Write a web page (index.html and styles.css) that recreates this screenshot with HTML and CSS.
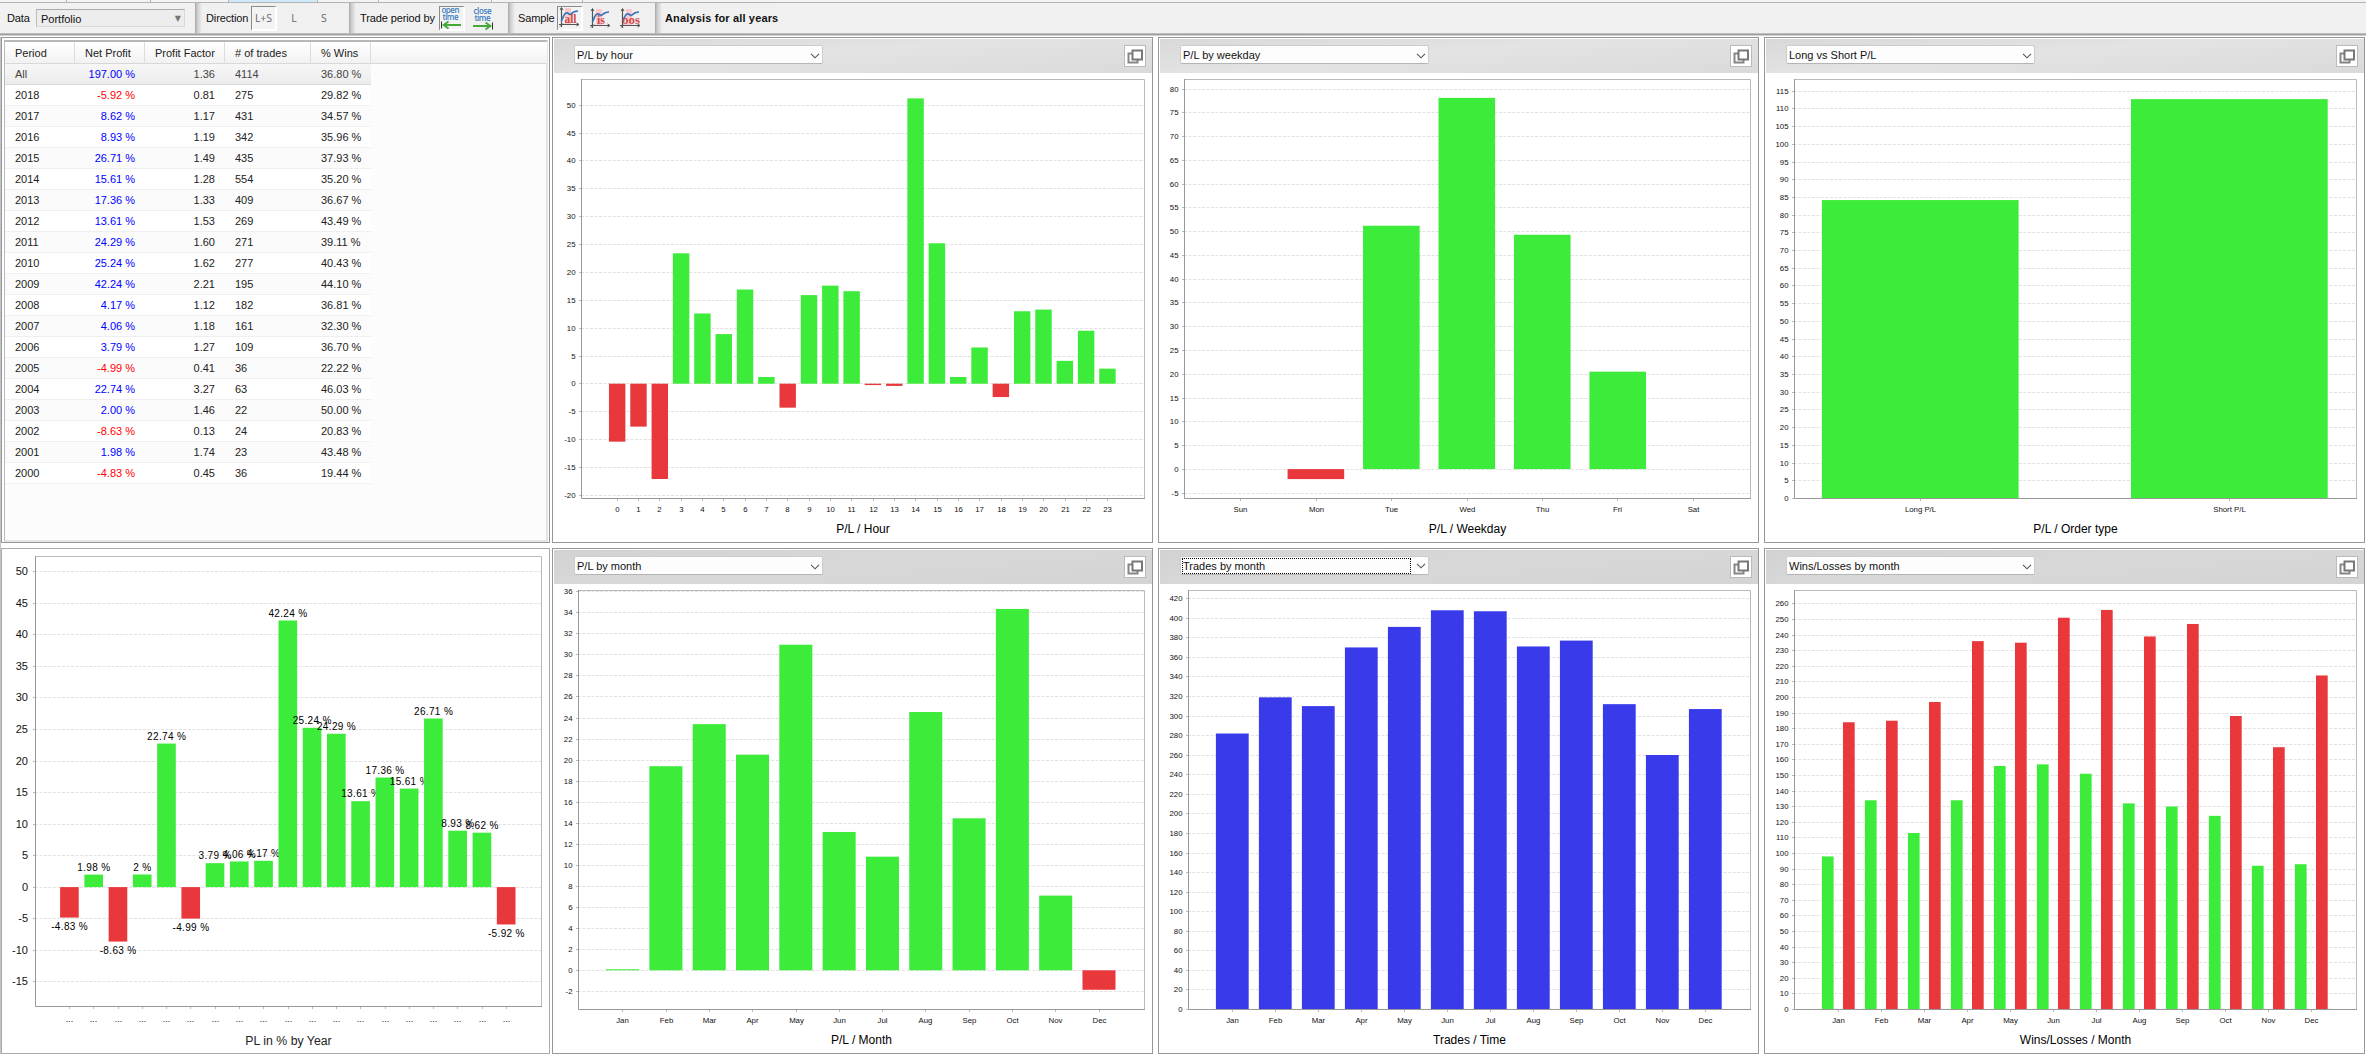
FILE: index.html
```html
<!DOCTYPE html>
<html lang="en">
<head>
<meta charset="utf-8">
<title>Analysis for all years</title>
<link rel="stylesheet" href="styles.css">
</head>
<body>
<svg class="symbols" width="0" height="0">
  <symbol id="sample" viewBox="0 0 21 21">
    <rect x="6" y="1" width="6" height="17" fill="#fbc9cb"/>
    <path d="M2.500 1v19M0 17.500h19.500" fill="none" stroke="#555" stroke-width="1.200"/>
    <path d="M1 3l1.500-2.500L4 3M1 19.500l3-3M17.500 16l2.500 1.500-2.500 1.500" fill="none" stroke="#555"/>
    <path d="M2 14C4 13 4 7 7 6s3 3 5 1 3-3 7-3" fill="none" stroke="#3576bd" stroke-width="1.700"/>
  </symbol>
  <symbol id="popout" viewBox="0 0 20 20">
    <path d="M3.500 7.500h9v9h-9z" fill="#fff" stroke="#858585" stroke-width="2"/>
    <path d="M7.500 4.500h9.500v9H7.500z" fill="#fff" stroke="#777" stroke-width="2"/>
  </symbol>
  <symbol id="chevron" viewBox="0 0 10 6"><path d="M1 .8l4 4 4-4" fill="none" stroke="#555" stroke-width="1.100"/></symbol>
</svg>

<div class="tabs"><i></i><i></i><i></i><i class="active"></i><i></i><i></i><i></i></div>
<header class="toolbar">
  <div class="group group-data"><span>Data</span><div class="combo"><span>Portfolio</span><b>▼</b></div></div>
  <div class="group group-direction"><span>Direction</span>
    <button class="tool pressed">L+S</button><button class="tool">L</button><button class="tool">S</button></div>
  <div class="group group-period"><span>Trade period by</span>
    <button class="tool pressed"><svg width="23" height="23" viewBox="0 0 23 23"><text class="time" x="10.500" y="7" textLength="18">open</text><text class="time" x="10.500" y="14" textLength="16">time</text><path d="M1.500 15.500v7" stroke="#333"/><path d="M21 19H5" stroke="#45a83a" stroke-width="2"/><path d="M8.500 15.500L3.500 19l5 3.500" fill="none" stroke="#45a83a" stroke-width="1.800"/></svg></button>
    <button class="tool close-time"><svg width="23" height="23" viewBox="0 0 23 23"><text class="time" x="11.500" y="7" textLength="18">close</text><text class="time" x="11.500" y="14" textLength="16">time</text><path d="M21.500 15.500v7" stroke="#333"/><path d="M2 19h16" stroke="#45a83a" stroke-width="2"/><path d="M14.500 15.500l5 3.500-5 3.500" fill="none" stroke="#45a83a" stroke-width="1.800"/></svg></button></div>
  <div class="group group-sample"><span>Sample</span>
    <button class="tool pressed"><svg width="21" height="21"><use href="#sample"/><text class="word" x="11.500" y="16" textLength="12" lengthAdjust="spacingAndGlyphs">all</text></svg></button>
    <button class="tool"><svg width="21" height="21"><use href="#sample"/><text class="word" x="11" y="16" textLength="8" lengthAdjust="spacingAndGlyphs">is</text></svg></button>
    <button class="tool oos"><svg width="21" height="21"><use href="#sample"/><text class="word" x="11" y="16" textLength="18" lengthAdjust="spacingAndGlyphs">oos</text></svg></button></div>
  <div class="group group-title"><strong>Analysis for all years</strong></div>
</header>

<main class="grid">
  <section class="panel periods">
    <div class="table-frame">
      <table>
        <thead><tr><th>Period</th><th>Net Profit</th><th>Profit Factor</th><th># of trades</th><th>% Wins</th><th></th></tr></thead>
        <tbody id="period-rows"></tbody>
      </table>
    </div>
  </section>
  <section class="panel">
    <div class="panel-head"><div class="select"><span>P/L by hour</span><svg><use href="#chevron"/></svg></div><button class="pop"><svg><use href="#popout"/></svg></button></div>
    <svg class="chart" id="hour"></svg>
  </section>
  <section class="panel">
    <div class="panel-head"><div class="select"><span>P/L by weekday</span><svg><use href="#chevron"/></svg></div><button class="pop"><svg><use href="#popout"/></svg></button></div>
    <svg class="chart" id="weekday"></svg>
  </section>
  <section class="panel">
    <div class="panel-head"><div class="select"><span>Long vs Short P/L</span><svg><use href="#chevron"/></svg></div><button class="pop"><svg><use href="#popout"/></svg></button></div>
    <svg class="chart" id="order"></svg>
  </section>
  <section class="panel yearly">
    <svg class="chart large" id="year"></svg>
  </section>
  <section class="panel lower">
    <div class="panel-head"><div class="select"><span>P/L by month</span><svg><use href="#chevron"/></svg></div><button class="pop"><svg><use href="#popout"/></svg></button></div>
    <svg class="chart" id="month"></svg>
  </section>
  <section class="panel lower">
    <div class="panel-head"><div class="select focused"><span>Trades by month</span><svg><use href="#chevron"/></svg></div><button class="pop"><svg><use href="#popout"/></svg></button></div>
    <svg class="chart" id="trades"></svg>
  </section>
  <section class="panel lower">
    <div class="panel-head"><div class="select"><span>Wins/Losses by month</span><svg><use href="#chevron"/></svg></div><button class="pop"><svg><use href="#popout"/></svg></button></div>
    <svg class="chart" id="wins"></svg>
  </section>
</main>
<script src="script.js"></script>
</body>
</html>
```
FILE: styles.css
```css
* { box-sizing: border-box; }
body {
  margin: 0;
  width: 2366px;
  height: 1056px;
  overflow: hidden;
  background: #fff;
  font: 11px "Liberation Sans", Arial, sans-serif;
  color: #111;
}
.symbols { position: absolute; }
button { padding: 0; border: 0; background: none; font: inherit; }

.tabs { display: flex; height: 3px; background: #f3f3f3; border-bottom: 1px solid #b4b4b4; }
.tabs i { border-right: 1px solid #b4b4b4; width: 84px; }
.tabs i:nth-child(1) { width: 67px; }
.tabs i:nth-child(3) { width: 78px; }
.tabs .active { width: 89px; background: #cdeafa; }
.tabs i:nth-child(5) { width: 61px; }
.tabs i:nth-child(6) { width: 113px; }
.tabs i:nth-child(7) { width: 91px; }

.toolbar {
  display: flex;
  height: 34px;
  padding-bottom: 3px;
  background: linear-gradient(#f1f1f1 0 30px, #bdbdbd 30px 31px, #9f9f9f 31px 32px, #d0d0d0 32px 33px, #fff 33px);
}
.group { display: flex; align-items: center; height: 30px; white-space: nowrap; }
.group + .group { background: linear-gradient(90deg, #a4a4a4 0, #c9c9c9 2px, #f0f0f0 7px); }
.group-data { width: 195px; padding-left: 7px; }
.group-direction { width: 154px; padding-left: 11px; }
.group-period { width: 159px; padding-left: 11px; }
.group-sample { width: 147px; padding-left: 10px; }
.group-title { padding-left: 10px; letter-spacing: 0.15px; }
.group > span { letter-spacing: -0.12px; }
.group-data > span { width: 29px; }
.group-direction > span { width: 45px; }
.group-period > span { width: 79px; }
.group-sample > span { width: 39px; }
.combo {
  display: flex;
  align-items: center;
  justify-content: space-between;
  width: 149px;
  height: 18px;
  padding: 1px 3px 0 4px;
  border: 1px solid #dadada;
  border-top: 1px solid #aaa;
  border-left-color: #bcbcbc;
  background: #ededed;
}
.combo b { color: #777; font: 8px "DejaVu Sans", sans-serif; }
.tool {
  display: flex;
  align-items: center;
  justify-content: center;
  flex: none;
  width: 26px;
  height: 25px;
  margin-right: 4px;
  color: #666;
  font: 10.5px "Open Sans", sans-serif;
  border: 1px solid transparent;
}
.tool svg { flex: none; overflow: visible; }
.pressed { border-color: #8b8b8b #fff #fff #8b8b8b; border-width: 1px 2px 2px 1px; background: #f3f3f3; }
.oos { margin-left: 0; }
.time { font: 600 8px "Open Sans", sans-serif; fill: #3d7dbd; text-anchor: middle; }
.word { font: bold 12px "Liberation Serif", serif; fill: #cf4b4b; text-anchor: middle; }

.grid {
  display: grid;
  grid-template-columns: 551px 606px 606px 601px;
  grid-template-rows: 506px 506px;
  row-gap: 5px;
  padding-left: 1px;
  box-shadow: inset 1px 0 #c4c4c4;
}
.panel { width: 601px; height: 506px; border: 1px solid #979797; background: #fff; }
.periods, .yearly { width: 549px; }
.yearly { border-color: #aaa; }
.panel-head {
  display: flex;
  justify-content: space-between;
  height: 35px;
  padding: 6px 6px 0 20px;
  border: solid #fff;
  border-width: 1px 0 0 1px;
  background: linear-gradient(175deg, #d9d9d9, #e3e3e3 45%, #dfdfdf 70%, #dadada);
}
.lower .panel-head { background: linear-gradient(175deg, #d2d2d2, #d8d8d8 45%, #d4d4d4); }
.select {
  display: flex;
  align-items: center;
  justify-content: space-between;
  width: 249px;
  height: 19px;
  padding: 1px 2px 0 2px;
  border: 1px solid #ccc;
  border-bottom-color: #b5b5b5;
  border-radius: 2px;
  background: #fdfdfd;
}
.select svg { width: 10px; height: 6px; margin-top: 1px; }
.focused { padding: 0 2px 0 1px; }
.focused span { width: 229px; height: 16px; line-height: 14px; border: 1px dotted #000; }
.pop { width: 22px; height: 22px; border: 1px solid #bbb; background: #fff; }
.pop svg { display: block; width: 20px; height: 20px; }

.table-frame {
  height: 502px;
  margin: 2px 1px 0 2px;
  border: 2px solid #e4e4e4;
  border-top: 2px solid #b8b8b8;
  border-left: 1px solid #bbb;
  background: #fcfcfc;
}
table { width: 542px; table-layout: fixed; border-collapse: separate; border-spacing: 0; color: #222; }
th {
  height: 22px;
  padding: 0 10px;
  text-align: left;
  font-weight: normal;
  white-space: nowrap;
  background: linear-gradient(#fff, #f2f2f2);
  border-right: 1px solid #dcdcdc;
  border-bottom: 1px solid #d8d8d8;
}
th:nth-child(1) { width: 70px; }
th:nth-child(2) { width: 70px; padding-right: 15px; text-align: right; }
th:nth-child(3) { width: 80px; text-align: right; }
th:nth-child(4) { width: 86px; }
th:nth-child(5) { width: 60px; }
th:nth-child(6) { border-right: 0; }
td { height: 21px; padding: 0 0 1px 10px; border-bottom: 1px solid #efefef; background: #fff; white-space: nowrap; }
tr:nth-child(odd) td { background: #fbfbfb; }
td:nth-child(2), td:nth-child(3) { text-align: right; padding-right: 10px; }
tbody tr:first-child td { background: linear-gradient(#f7f7f7, #ececec); border-color: #dadada; color: #444; }
tbody td:last-child { border: 0; background: none !important; }
tbody tr .up { color: #00f !important; }
tbody tr .down { color: red; }

.chart { display: block; width: 599px; height: 469px; }
.chart.large { width: 547px; height: 504px; }
.chart text { text-anchor: middle; fill: #111; font-size: 7.8px; }
.chart .y { text-anchor: end; }
.chart .title { font-size: 12px; fill: #000; }
.large .y { font-size: 11px; fill: #111; }
.large .dots { font-size: 9px; fill: #111; }
.large .value { font-size: 10px; letter-spacing: 0.35px; fill: #000; }
.large .title { font-size: 12.3px; fill: #222; }
.gridline { stroke: #e2e2e2; stroke-dasharray: 3 1.500; }
.frame { fill: none; stroke: #b9b9b9; }
.axis { fill: none; stroke: #999; }
.green { fill: #3deb3a; }
.red { fill: #e8383b; }
.blue { fill: #393aea; }
```
FILE: script.js
```js
const periods = [
  ["All", "197.00", "1.36", "4114", "36.80"],
  ["2018", "-5.92", "0.81", "275", "29.82"],
  ["2017", "8.62", "1.17", "431", "34.57"],
  ["2016", "8.93", "1.19", "342", "35.96"],
  ["2015", "26.71", "1.49", "435", "37.93"],
  ["2014", "15.61", "1.28", "554", "35.20"],
  ["2013", "17.36", "1.33", "409", "36.67"],
  ["2012", "13.61", "1.53", "269", "43.49"],
  ["2011", "24.29", "1.60", "271", "39.11"],
  ["2010", "25.24", "1.62", "277", "40.43"],
  ["2009", "42.24", "2.21", "195", "44.10"],
  ["2008", "4.17", "1.12", "182", "36.81"],
  ["2007", "4.06", "1.18", "161", "32.30"],
  ["2006", "3.79", "1.27", "109", "36.70"],
  ["2005", "-4.99", "0.41", "36", "22.22"],
  ["2004", "22.74", "3.27", "63", "46.03"],
  ["2003", "2.00", "1.46", "22", "50.00"],
  ["2002", "-8.63", "0.13", "24", "20.83"],
  ["2001", "1.98", "1.74", "23", "43.48"],
  ["2000", "-4.83", "0.45", "36", "19.44"]
];

document.getElementById("period-rows").innerHTML = periods.map(([period, profit, factor, trades, wins]) =>
  `<tr><td>${period}</td><td class="${profit < 0 ? "down" : "up"}">${profit} %</td><td>${factor}</td>` +
  `<td>${trades}</td><td>${wins} %</td><td></td></tr>`).join("");

// Bar chart: `zero` is the y of value 0, `unit` the pixels per value step.
// Outer margins take 5% of the plot width each, gaps between categories 20%.
function drawChart(id, c) {
  const { left, right, top = 6, bottom = 425, zero, unit, min, max, step, labels, series } = c;
  const width = right - left;
  const n = labels.length;
  const many = series.length > 1;
  const category = width * 0.7 / n;
  const pitch = category + width * 0.2 / (n - 1);
  const bar = many ? width * 0.5 / (n * series.length) : category;
  const inner = many ? width * 0.2 / (n * (series.length - 1)) : 0;
  const start = left + width * 0.05;
  const dx = c.values ? 7 : 5.5;
  let out = "";

  for (let v = min; v <= max; v += step) {
    const y = Math.round(zero - v * unit) + 0.5;
    out += `<path class="gridline" d="M${left} ${y}H${right}"/><path class="frame" d="M${left - 2} ${y}h2"/>` +
      `<text class="y" x="${left - dx}" y="${y}" dy=".36em">${v}</text>`;
  }
  out += `<path class="frame" d="M${left} ${top + 0.5}H${right + 0.5}V${bottom}"/>`;
  labels.forEach((label, i) => {
    const middle = start + i * pitch + category / 2;
    series.forEach((s, k) => {
      const v = s.data[i];
      const y = zero + 0.3 - Math.max(v, 0) * unit;
      const h = Math.abs(v) * unit;
      const color = v < 0 ? "red" : s.color;
      const x = start + i * pitch + k * (bar + inner) - 0.2;
      if (v) out += `<rect class="${color}" x="${x}" y="${y}" width="${bar}" height="${h}"/>`;
      if (c.values) out += `<text class="value" x="${middle}" y="${v < 0 ? y + h + 9 : y - 7.5}" dy=".36em">${v} %</text>`;
    });
    const tick = Math.floor(middle) + 0.5;
    out += `<path class="frame" d="M${tick} ${bottom}v3"/>` +
      `<text class="${c.values ? "dots" : "x"}" x="${tick}" y="${bottom + (c.values ? 16 : 14)}">${label}</text>`;
  });
  out += `<path class="axis" d="M${left + 0.5} ${top}V${bottom + 0.5}H${right + 1}"/>` +
    `<text class="title" x="${(left + right) / 2 + 0.5}" y="${bottom + (c.values ? 38.500 : 34.500)}">${c.title}</text>`;
  document.getElementById(id).innerHTML = out;
}

const months = ["Jan", "Feb", "Mar", "Apr", "May", "Jun", "Jul", "Aug", "Sep", "Oct", "Nov", "Dec"];

drawChart("hour", {
  left: 28, right: 591, zero: 310.4, unit: 5.573, min: -20, max: 50, step: 5, title: "P/L / Hour",
  labels: Array.from({ length: 24 }, (_, i) => i),
  series: [{ color: "green", data: [-10.4, -7.7, -17.1, 23.4, 12.6, 8.9, 16.9, 1.2, -4.3, 15.9, 17.6, 16.6, -0.25, -0.4, 51.2, 25.2, 1.2, 6.5, -2.4, 13, 13.3, 4.1, 9.5, 2.7] }]
});
drawChart("weekday", {
  left: 25, right: 591, zero: 395.8, unit: 4.753, min: -5, max: 80, step: 5, title: "P/L / Weekday",
  labels: ["Sun", "Mon", "Tue", "Wed", "Thu", "Fri", "Sat"],
  series: [{ color: "green", data: [0, -2.1, 51.2, 78.1, 49.3, 20.5, 0] }]
});
drawChart("order", {
  left: 29, right: 591, zero: 425, unit: 3.542, min: 0, max: 115, step: 5, title: "P/L / Order type",
  labels: ["Long P/L", "Short P/L"],
  series: [{ color: "green", data: [84.2, 112.7] }]
});
drawChart("year", {
  left: 33, right: 539, top: 7, bottom: 457, zero: 337.8, unit: 6.312, min: -15, max: 50, step: 5, title: "PL in % by Year",
  values: true,
  labels: Array(19).fill("..."),
  series: [{ color: "green", data: periods.slice(1).reverse().map(p => Number(p[1])) }]
});
drawChart("month", {
  left: 25, right: 591, zero: 386, unit: 10.52, min: -2, max: 36, step: 2, title: "P/L / Month",
  labels: months,
  series: [{ color: "green", data: [0.1, 19.4, 23.4, 20.5, 30.95, 13.15, 10.8, 24.55, 14.45, 34.35, 7.1, -1.85] }]
});
drawChart("trades", {
  left: 29, right: 591, zero: 425, unit: 0.978, min: 0, max: 420, step: 20, title: "Trades / Time",
  labels: months,
  series: [{ color: "blue", data: [282, 319, 310, 370, 391, 408, 407, 371, 377, 312, 260, 307] }]
});
drawChart("wins", {
  left: 29, right: 591, zero: 425, unit: 1.56, min: 0, max: 260, step: 10, title: "Wins/Losses / Month",
  labels: months,
  series: [
    { color: "green", data: [98, 134, 113, 134, 156, 157, 151, 132, 130, 124, 92, 93] },
    { color: "red", data: [184, 185, 197, 236, 235, 251, 256, 239, 247, 188, 168, 214] }
  ]
});
```
